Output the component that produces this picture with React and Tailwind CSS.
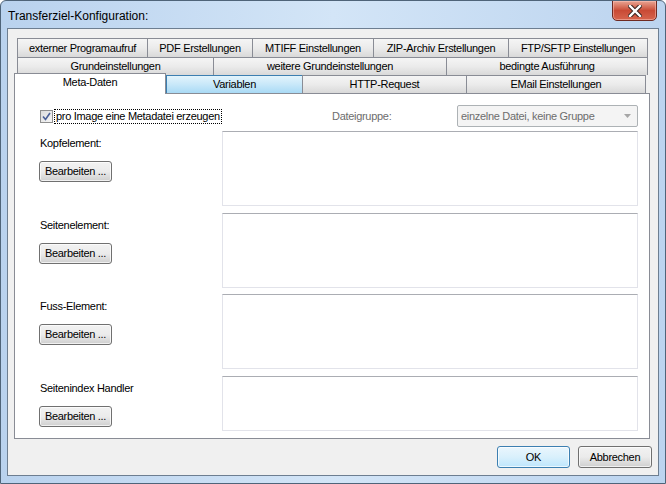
import React from 'react'

const FONT = { fontFamily: '"Liberation Sans", Arial, sans-serif' }

const ROW1 = [
  ['externer Programaufruf', 'w-[130px]'],
  ['PDF Erstellungen', 'w-[105px]'],
  ['MTIFF Einstellungen', 'w-[121px]'],
  ['ZIP-Archiv Erstellungen', 'w-[135px]'],
  ['FTP/SFTP Einstellungen', 'w-[140px]'],
]

const ROW2 = [
  ['Grundeinstellungen', 'w-[196px]'],
  ['weitere Grundeinstellungen', 'w-[233px]'],
  ['bedingte Ausführung', 'w-[202px]'],
]

const SECTIONS = [
  { label: 'Kopfelement:', h: 'h-[75px]', mt: 'mt-[4px]' },
  { label: 'Seitenelement:', h: 'h-[75px]', mt: 'mt-[7px]' },
  { label: 'Fuss-Element:', h: 'h-[75px]', mt: 'mt-[6px]' },
  { label: 'Seitenindex Handler', h: 'h-[55px]', mt: 'mt-[7px]' },
]

function Tab({ label, width, last, hover }) {
  const look = hover
    ? 'bg-gradient-to-b from-[#e3f4fc] via-[#c8e8f9] to-[#a9daf5] border-[#3c7fb1]'
    : 'bg-gradient-to-b from-[#f5f5f5] via-[#ebebeb] to-[#d9d9d9] border-[#898c95]'
  return (
    <div
      className={`${width} h-full flex items-center justify-center border-t border-l ${last ? 'border-r' : ''} ${look} text-[11px] tracking-[-0.3px] text-black leading-none`}
    >
      {label}
    </div>
  )
}

function WinButton({ children, className = '', primary }) {
  const look = primary
    ? 'border-[#3c7fb1] bg-gradient-to-b from-[#eaf6fd] via-[#d9f0fc] to-[#bee6fd]'
    : 'border-[#707070] bg-gradient-to-b from-[#f2f2f2] via-[#ebebeb] to-[#cfcfcf]'
  return (
    <div
      className={`flex items-center justify-center rounded-[3px] border ${look} text-[11px] tracking-[-0.3px] text-black leading-none shadow-[inset_0_0_0_1px_rgba(255,255,255,0.7)] ${className}`}
    >
      {children}
    </div>
  )
}

export default function App() {
  return (
    <div style={FONT} className="w-[666px] h-[484px] relative overflow-hidden rounded-t-[6px] border border-[#4f6479] bg-gradient-to-r from-[#b9d2ee] via-[#d3e5f7] to-[#bcd4ef] flex flex-col">
      {/* Titelleiste */}
      <div className="h-[27px] pl-[7px] pt-[3px] flex items-center text-[12px] text-black">
        Transferziel-Konfiguration:
      </div>

      {/* Schliessen */}
      <div className="absolute top-[-1px] right-[8px] w-[45px] h-[21px] rounded-b-[5px] border border-[#6e2a22] bg-gradient-to-b from-[#e8a493] via-[#c94a35] to-[#d6644d] flex items-center justify-center shadow-[inset_0_0_0_1px_rgba(255,200,190,0.5)]">
        <svg width="14" height="12" viewBox="0 0 14 12">
          <path d="M2 1 L12 11 M12 1 L2 11" stroke="#3b2420" strokeWidth="4.4" strokeLinecap="square" />
          <path d="M2 1 L12 11 M12 1 L2 11" stroke="#ffffff" strokeWidth="2.4" strokeLinecap="square" />
        </svg>
      </div>

      {/* Client-Bereich */}
      <div className="mx-[6px] mb-[7px] flex-1 border border-[#6d7e91] bg-[#f0f0f0] flex flex-col">
        <div className="ml-[6px] mt-[9px] w-[636px] flex flex-col">
          {/* Reiterzeile 1 */}
          <div className="ml-[3px] h-[19px] flex">
            {ROW1.map(([l, w], i) => (
              <Tab key={l} label={l} width={w} last={i === ROW1.length - 1} />
            ))}
          </div>
          {/* Reiterzeile 2 */}
          <div className="ml-[3px] h-[18px] flex">
            {ROW2.map(([l, w], i) => (
              <Tab key={l} label={l} width={w} last={i === ROW2.length - 1} />
            ))}
          </div>
          {/* Reiterzeile 3 */}
          <div className="h-[18px] flex items-end">
            <div className="w-[152px] h-[21px] relative z-10 -mb-[1px] bg-white border border-b-0 border-[#898c95] flex justify-center pt-[3px] text-[11px] tracking-[-0.3px] text-black leading-none">
              Meta-Daten
            </div>
            <Tab label="Variablen" width="w-[136px]" hover />
            <Tab label="HTTP-Request" width="w-[164px]" />
            <Tab label="EMail Einstellungen" width="w-[180px]" last />
          </div>

          {/* Reiterseite */}
          <div className="h-[346px] bg-white border border-[#898c95] flex flex-col text-[11px] tracking-[-0.3px] text-black">
            <div className="mt-[11px] h-[22px] flex items-center">
              <div className="ml-[25px] w-[292px] flex items-center">
                <div className="w-[13px] h-[13px] border border-[#8f8f8f] bg-gradient-to-br from-[#dcdcdc] to-[#f6f6f6] flex items-center justify-center">
                  <svg width="9" height="9" viewBox="0 0 9 9">
                    <path d="M1 4.5 L3.5 7.5 L8 1" fill="none" stroke="#4a5f97" strokeWidth="1.6" />
                  </svg>
                </div>
                <span className="ml-[1px] px-[1px] border border-dotted border-black leading-[13px]">
                  pro Image eine Metadatei erzeugen
                </span>
              </div>
              <div className="w-[125px] text-[#6d6d6d]">Dateigruppe:</div>
              <div className="w-[181px] h-[22px] rounded-[2px] border border-[#adb2b5] bg-[#f4f4f4] flex items-center pl-[3px] pr-[6px] text-[#6d6d6d]">
                <span className="flex-1">einzelne Datei, keine Gruppe</span>
                <svg width="7" height="4" viewBox="0 0 7 4">
                  <path d="M0 0 H7 L3.5 4 Z" fill="#a6a6a6" />
                </svg>
              </div>
            </div>

            {SECTIONS.map((s) => (
              <div key={s.label} className={`flex ${s.mt}`}>
                <div className="ml-[24px] w-[183px] flex flex-col items-start">
                  <div className="mt-[5px] h-[14px] leading-[14px] pl-[1px]">{s.label}</div>
                  <WinButton className="mt-[11px] w-[73px] h-[21px]">Bearbeiten ...</WinButton>
                </div>
                <div className={`w-[416px] ${s.h} bg-white border border-[#e2e3ea] border-t-[#abadb3]`} />
              </div>
            ))}
          </div>
        </div>

        {/* Dialogknöpfe */}
        <div className="mt-[7px] flex justify-end pr-[6px] gap-[8px]">
          <WinButton primary className="w-[73px] h-[22px]">OK</WinButton>
          <WinButton className="w-[74px] h-[22px]">Abbrechen</WinButton>
        </div>
      </div>
    </div>
  )
}
